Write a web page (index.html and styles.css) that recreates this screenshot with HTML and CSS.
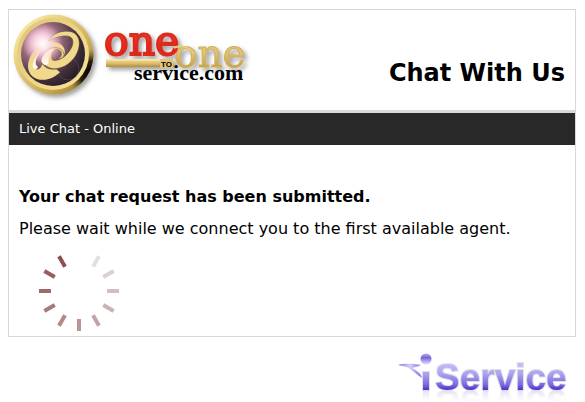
FILE: index.html
```html
<!DOCTYPE html>
<html lang="en">
<head>
<meta charset="utf-8">
<title>Chat With Us</title>
<link rel="stylesheet" href="styles.css">
</head>
<body>
<main class="panel">
  <header class="header">
    <svg class="logo" viewBox="12 10 250 100" role="img" aria-label="One to One Service.com">
      <defs>
        <linearGradient id="rim" x1="0" y1="0" x2="1" y2="1">
          <stop offset="0" stop-color="#fff3b8"/><stop offset=".3" stop-color="#ecd483"/><stop offset=".7" stop-color="#c8a64f"/><stop offset="1" stop-color="#8d712d"/>
        </linearGradient>
        <radialGradient id="rimShade" gradientUnits="userSpaceOnUse" cx="91" cy="73" r="24">
          <stop offset="0" stop-color="#000"/><stop offset=".5" stop-color="#1a1203" stop-opacity=".9"/><stop offset="1" stop-color="#6b501a" stop-opacity="0"/>
        </radialGradient>
        <linearGradient id="rimInner" x1="0" y1="0" x2="1" y2="1">
          <stop offset="0" stop-color="#e0c373"/><stop offset=".5" stop-color="#ecd587"/><stop offset="1" stop-color="#f6e29b"/>
        </linearGradient>
        <radialGradient id="disc" cx=".32" cy=".32" r=".75">
          <stop offset="0" stop-color="#fff"/><stop offset=".16" stop-color="#f3c3d4"/><stop offset=".42" stop-color="#93667a"/><stop offset=".75" stop-color="#43303b"/><stop offset="1" stop-color="#261e24"/>
        </radialGradient>
        <radialGradient id="flare">
          <stop offset="0" stop-color="#fff"/><stop offset=".3" stop-color="#ffe6ee" stop-opacity=".8"/><stop offset="1" stop-color="#f7b4ca" stop-opacity="0"/>
        </radialGradient>
        <linearGradient id="gold" x1="0" y1="0" x2="0" y2="1">
          <stop offset="0" stop-color="#f3dc91"/><stop offset=".5" stop-color="#dfc270"/><stop offset="1" stop-color="#b18d3a"/>
        </linearGradient>
        <linearGradient id="red" x1="0" y1="0" x2="0" y2="1">
          <stop offset="0" stop-color="#f2513c"/><stop offset=".5" stop-color="#e8301f"/><stop offset="1" stop-color="#c41c12"/>
        </linearGradient>
        <filter id="soft" x="-20%" y="-20%" width="150%" height="150%"><feDropShadow dx="3" dy="3" stdDeviation="2" flood-color="#555" flood-opacity=".55"/></filter>
      </defs>
      <circle cx="53.500" cy="54.500" r="40" fill="url(#rim)" filter="url(#soft)"/>
      <circle cx="53.500" cy="54.500" r="40" fill="url(#rimShade)"/>
      <circle cx="53" cy="54" r="36" fill="url(#rimInner)"/>
      <circle cx="53" cy="54" r="32" fill="url(#disc)"/>
      <circle cx="68" cy="69" r="11" fill="none" stroke="#6c525e" stroke-width=".5"/>
      <g transform="scale(.33333)">
        <path fill="#f0d98a" d="M140 129C112 137 86 164 84 197C84 226 107 242 136 239C154 237 169 228 180 217L169 208C151 211 136 206 127 193C124 207 110 213 101 204C96 190 106 167 123 152C140 139 161 138 176 148C186 154 189 165 185 176C198 165 198 145 184 134C173 126 154 124 140 129Z"/>
        <path fill="#f0d98a" stroke="#5d4036" stroke-width="1.500" fill-rule="evenodd" d="M145 123C157 99 190 88 216 96C239 105 243 130 232 157C220 186 190 207 163 206C143 206 129 194 128 178C128 158 150 143 166 143C180 143 190 150 192 164C188 177 178 178 171 180C190 177 209 158 217 137C224 113 210 106 191 108C173 109 157 117 145 123ZM166 149C157 156 154 167 156 178C160 183 166 182 171 180C182 174 186 166 184 157C180 149 173 147 166 149Z"/>
        <path fill="#fffbe4" d="M124 184C125 164 142 149 162 144C148 159 145 176 146 187C143 199 128 197 124 184ZM98 200C98 180 109 164 123 153C106 176 102 191 114 201C110 211 101 209 98 200Z"/>
      </g>
      <circle cx="43" cy="44" r="20" fill="url(#flare)"/>
      <g filter="url(#soft)">
        <rect x="106" y="59" width="68" height="8" fill="url(#gold)"/>
        <path d="M106 60H174" stroke="#fff0b8"/>
        <text class="gold-word" x="174" y="67">one</text>
        <text class="red-word" x="104" y="55">one</text>
      </g>
      <path d="M160 59H173V68H160Z" fill="#dfc477"/>
      <path d="M174 48C180 44 190 47 194 54" fill="none" stroke="#e9cd7f" stroke-width="2"/>
      <text class="to" x="161" y="67">TO</text>
      <text class="domain" x="134" y="80">service.com</text>
    </svg>
    <h1 class="title">Chat With Us</h1>
  </header>
  <div class="status">Live Chat - Online</div>
  <section class="content">
    <h2 class="lead">Your chat request has been submitted.</h2>
    <p class="message">Please wait while we connect you to the first available agent.</p>
    <svg class="spinner" viewBox="-40 -40 80 80" role="img" aria-label="Connecting">
      <g stroke-width="4">
        <path d="M0-28V-40" stroke="#e3dfdf" transform="rotate(30)"/>
        <path d="M0-28V-40" stroke="#dcd1d1" transform="rotate(60)"/>
        <path d="M0-28V-40" stroke="#d2c0c0" transform="rotate(90)"/>
        <path d="M0-28V-40" stroke="#cab2b2" transform="rotate(120)"/>
        <path d="M0-28V-40" stroke="#c2a4a4" transform="rotate(150)"/>
        <path d="M0-28V-40" stroke="#ba9696" transform="rotate(180)"/>
        <path d="M0-28V-40" stroke="#b28888" transform="rotate(210)"/>
        <path d="M0-28V-40" stroke="#a97979" transform="rotate(240)"/>
        <path d="M0-28V-40" stroke="#a06a6a" transform="rotate(270)"/>
        <path d="M0-28V-40" stroke="#985c5c" transform="rotate(300)"/>
        <path d="M0-28V-40" stroke="#8f4e4e" transform="rotate(330)"/>
      </g>
    </svg>
  </section>
</main>
<footer class="footer">
  <svg class="brand" viewBox="396 350 174 50" role="img" aria-label="iService">
    <defs>
      <linearGradient id="violet" gradientUnits="userSpaceOnUse" x1="0" y1="360" x2="0" y2="391">
        <stop offset="0" stop-color="#ccc9fc"/><stop offset=".45" stop-color="#aaa2ef"/><stop offset=".8" stop-color="#7c68df"/><stop offset="1" stop-color="#4622c4"/>
      </linearGradient>
      <linearGradient id="ball" x1="0" y1="0" x2="0" y2="1">
        <stop offset="0" stop-color="#b9b0f2"/><stop offset=".4" stop-color="#7460d4"/><stop offset=".5" stop-color="#8f80e3"/><stop offset="1" stop-color="#e4e1ff"/>
      </linearGradient>
      <linearGradient id="arm"><stop offset="0" stop-color="#8573e6"/><stop offset=".5" stop-color="#d3d0fa"/><stop offset="1" stop-color="#806fdd"/></linearGradient>
    </defs>
    <path d="M398 365C405 363 415 364 421 365C417 367 414 367 412 368C416 370 421 373 422 378C417 375 412 370 407 367C404 366 401 366 398 365Z" fill="url(#arm)"/>
    <circle cx="426" cy="359" r="5.500" fill="url(#ball)"/>
    <path d="M423 372H429V390H423Z" fill="url(#violet)" stroke="#dedee8" stroke-width="2" paint-order="stroke"/>
    <text class="wordmark" x="435" y="390">Service</text>
  </svg>
</footer>
</body>
</html>
```
FILE: styles.css
```css
* {
  box-sizing: border-box;
}

body {
  margin: 9px 9px 0 8px;
  background: #fff;
  color: #000;
  font-family: Verdana, "DejaVu Sans", sans-serif;
}

.panel {
  border: 1px solid #d8d8d8;
}

.header {
  display: flex;
  justify-content: space-between;
  align-items: flex-start;
  padding: 0 10px 0 3px;
  border-bottom: 3px solid #d8d8d8;
}

.logo {
  display: block;
  flex: none;
  width: 250px;
  height: 100px;
}

.red-word {
  font: 41px "DejaVu Serif", serif;
  fill: url(#red);
  stroke: #dc2c1f;
  stroke-width: 2px;
}

.gold-word {
  font: 39px "DejaVu Serif", serif;
  fill: url(#gold);
  stroke: #cfae5c;
  stroke-width: 1px;
}

.to {
  font: bold 8px "Liberation Sans", sans-serif;
}

.domain {
  font: bold 22px "Liberation Serif", serif;
}

.title {
  margin: 48px 0 0;
  font-size: 24px;
  line-height: 30px;
  white-space: nowrap;
}

.status {
  padding: 8px 10px;
  background: #282828;
  color: #fff;
  font-size: 13px;
  line-height: 16px;
}

.content {
  padding: 40px 10px 5px;
}

.lead,
.message {
  margin: 0 0 8px;
  font-size: 16px;
  line-height: 24px;
}

.message {
  margin-bottom: 10px;
}

.spinner {
  display: block;
  width: 80px;
  height: 80px;
  margin-left: 20px;
}

.footer {
  display: flex;
  justify-content: flex-end;
  overflow: hidden;
  padding: 13px 6px 2px 0;
}

.brand {
  display: block;
  width: 174px;
  height: 50px;
  -webkit-box-reflect: below -20px linear-gradient(transparent 55%, rgba(0, 0, 0, 0.3));
}

.wordmark {
  font: bold 37px "Liberation Sans", sans-serif;
  fill: url(#violet);
  stroke: #dedee8;
  stroke-width: 2px;
  paint-order: stroke;
}
```
